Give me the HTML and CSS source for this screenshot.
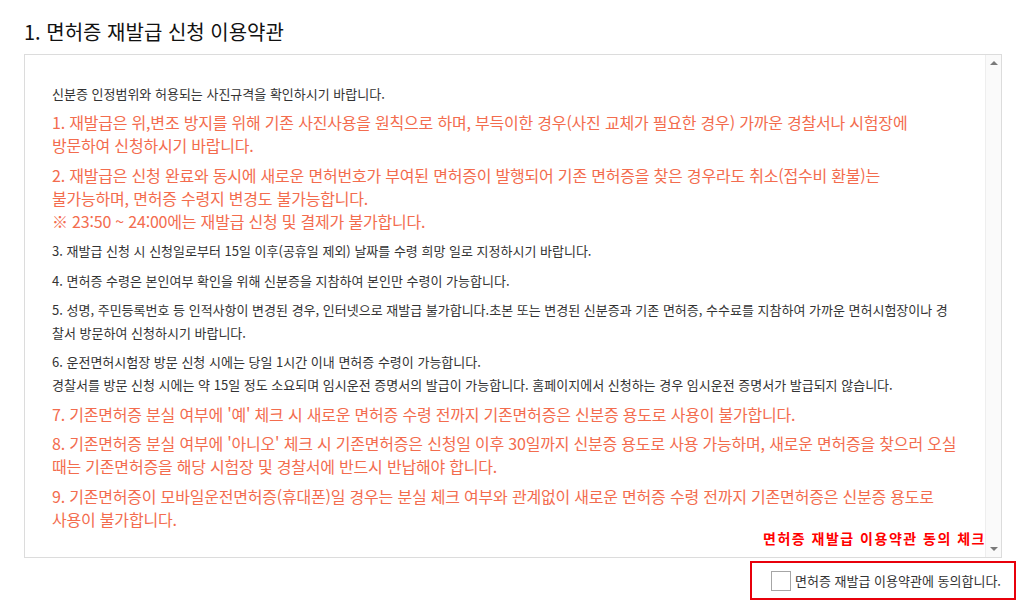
FILE: index.html
```html
<!DOCTYPE html>
<html lang="ko">
<head>
<meta charset="utf-8">
<title>면허증 재발급 신청 이용약관</title>
<link rel="stylesheet" href="styles.css">
</head>
<body>
<div class="page">
  <h2 class="title">1. 면허증 재발급 신청 이용약관</h2>
  <div class="terms">
    <div class="terms-body">
      <p class="sm">신분증 인정범위와 허용되는 사진규격을 확인하시기 바랍니다.</p>
      <p class="lg">1. 재발급은 위,변조 방지를 위해 기존 사진사용을 원칙으로 하며, 부득이한 경우(사진 교체가 필요한 경우) 가까운 경찰서나 시험장에<br>방문하여 신청하시기 바랍니다.</p>
      <p class="lg">2. 재발급은 신청 완료와 동시에 새로운 면허번호가 부여된 면허증이 발행되어 기존 면허증을 찾은 경우라도 취소(접수비 환불)는<br>불가능하며, 면허증 수령지 변경도 불가능합니다.<br>※ 23:50 ~ 24:00에는 재발급 신청 및 결제가 불가합니다.</p>
      <p class="sm">3. 재발급 신청 시 신청일로부터 15일 이후(공휴일 제외) 날짜를 수령 희망 일로 지정하시기 바랍니다.</p>
      <p class="sm">4. 면허증 수령은 본인여부 확인을 위해 신분증을 지참하여 본인만 수령이 가능합니다.</p>
      <p class="sm">5. 성명, 주민등록번호 등 인적사항이 변경된 경우, 인터넷으로 재발급 불가합니다.초본 또는 변경된 신분증과 기존 면허증, 수수료를 지참하여 가까운 면허시험장이나 경<br>찰서 방문하여 신청하시기 바랍니다.</p>
      <p class="sm">6. 운전면허시험장 방문 신청 시에는 당일 1시간 이내 면허증 수령이 가능합니다.<br>경찰서를 방문 신청 시에는 약 15일 정도 소요되며 임시운전 증명서의 발급이 가능합니다. 홈페이지에서 신청하는 경우 임시운전 증명서가 발급되지 않습니다.</p>
      <p class="lg">7. 기존면허증 분실 여부에 '예' 체크 시 새로운 면허증 수령 전까지 기존면허증은 신분증 용도로 사용이 불가합니다.</p>
      <p class="lg">8. 기존면허증 분실 여부에 '아니오' 체크 시 기존면허증은 신청일 이후 30일까지 신분증 용도로 사용 가능하며, 새로운 면허증을 찾으러 오실<br>때는 기존면허증을 해당 시험장 및 경찰서에 반드시 반납해야 합니다.</p>
      <p class="lg">9. 기존면허증이 모바일운전면허증(휴대폰)일 경우는 분실 체크 여부와 관계없이 새로운 면허증 수령 전까지 기존면허증은 신분증 용도로<br>사용이 불가합니다.</p>
    </div>
    <div class="scrollbar">
      <span class="arrow up"></span>
      <span class="arrow down"></span>
    </div>
    <p class="mark">면허증 재발급 이용약관 동의 체크</p>
  </div>
  <div class="agree-row">
    <label class="agree"><span class="check"></span>면허증 재발급 이용약관에 동의합니다.</label>
  </div>
</div>
</body>
</html>
```
FILE: styles.css
```css
html, body {
  margin: 0;
  padding: 0;
  background: #fff;
}
body {
  font-family: "Noto Sans CJK KR", "Noto Sans", sans-serif;
  color: #333;
}
.page {
  padding: 18px 22px 0 24px;
}
.title {
  margin: 0 0 8px 0;
  font-size: 20px;
  font-weight: 400;
  line-height: 28px;
  color: #111;
}
.terms {
  position: relative;
  display: flex;
  height: 502px;
  border: 1px solid #dcdcdc;
  background: #fff;
}
.terms-body {
  flex: 1;
  padding: 27px 0 0 27px;
  overflow: hidden;
}
.terms-body p {
  margin: 0 0 6.4px 0;
  line-height: 23px;
  white-space: nowrap;
}
.sm {
  font-size: 13px;
  color: #333;
}
.lg {
  font-size: 16px;
  color: #f36c4e;
  letter-spacing: -0.2px;
}
.scrollbar {
  width: 15px;
  background: #fafafa;
  border-left: 1px solid #eee;
  display: flex;
  flex-direction: column;
  justify-content: space-between;
  align-items: center;
  padding: 6px 0;
}
.arrow {
  width: 0;
  height: 0;
  border-left: 4px solid transparent;
  border-right: 4px solid transparent;
}
.arrow.up {
  border-bottom: 4px solid #7a7a7a;
}
.arrow.down {
  border-top: 4px solid #7a7a7a;
}
.mark {
  position: absolute;
  right: 15px;
  bottom: 9px;
  margin: 0;
  font-size: 14px;
  font-weight: 700;
  color: #f00;
  letter-spacing: 1.5px;
  line-height: 20px;
}
.agree-row {
  display: flex;
  justify-content: flex-end;
  margin: 3px -14px 0 0;
}
.agree {
  display: flex;
  align-items: center;
  gap: 4px;
  height: 35px;
  padding: 0 13px 0 19px;
  border: 2px solid #e8000b;
  font-size: 13px;
  color: #333;
}
.check {
  width: 18px;
  height: 18px;
  border: 1px solid #a6a6a6;
  background: #fff;
}
```
